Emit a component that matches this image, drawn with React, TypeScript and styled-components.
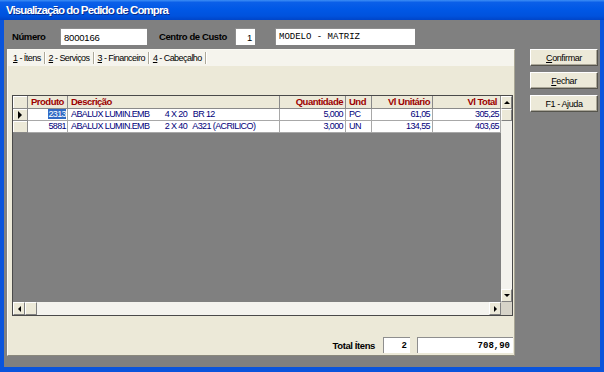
import styled, { createGlobalStyle } from "styled-components";

const sans = `"Liberation Sans", Arial, sans-serif`;
const mono = `"Liberation Mono", "Courier New", monospace`;

const GlobalStyle = createGlobalStyle`
  html, body {
    margin: 0;
    padding: 0;
    background: #808080;
  }
  body {
    font-family: ${sans};
    font-size: 9.5px;
    letter-spacing: -0.4px;
    color: #000;
  }
`;

const Window = styled.div`
  width: 604px;
  height: 372px;
  display: flex;
  flex-direction: column;
  overflow: hidden;
`;

const TitleBar = styled.div`
  height: 20px;
  flex: none;
  display: flex;
  align-items: center;
  padding-left: 6px;
  background: linear-gradient(#3d8ef5 0%, #0b5fe8 12%, #0058e6 45%, #0052dd 80%, #0045c8 100%);
`;

const Title = styled.span`
  color: #fff;
  font: bold 11.5px ${sans};
  letter-spacing: -0.9px;
  text-shadow: 1px 1px #0a2a8a;
`;

const Body = styled.div`
  flex: 1;
  background: #808080;
  border: solid #0a54dc;
  border-width: 0 4px 5px 4px;
  display: flex;
  flex-direction: column;
`;

const HeaderRow = styled.div`
  margin-top: 8px;
  padding-left: 8px;
  height: 17px;
  display: flex;
  align-items: center;
`;

const Label = styled.span<{ $w?: number; $ml?: number; $mr?: number }>`
  font-weight: bold;
  white-space: nowrap;
  width: ${(p) => (p.$w ? `${p.$w}px` : "auto")};
  margin-left: ${(p) => p.$ml ?? 0}px;
  margin-right: ${(p) => p.$mr ?? 0}px;
  flex: none;
`;

const Field = styled.div<{ $w: number; $h?: number; $ml?: number; $right?: boolean; $mono?: boolean; $bold?: boolean }>`
  box-sizing: border-box;
  width: ${(p) => p.$w}px;
  height: ${(p) => p.$h ?? 17}px;
  margin-left: ${(p) => p.$ml ?? 0}px;
  flex: none;
  background: #fff;
  box-shadow: inset 1px 1px #8e8e8e;
  display: flex;
  align-items: center;
  justify-content: ${(p) => (p.$right ? "flex-end" : "flex-start")};
  padding: 1px 3px 0 4px;
  font-family: ${(p) => (p.$mono ? mono : sans)};
  font-size: ${(p) => (p.$mono ? "9px" : "9.5px")};
  letter-spacing: ${(p) => (p.$mono ? "0" : "-0.2px")};
  font-weight: ${(p) => (p.$bold ? "bold" : "normal")};
  white-space: pre;
`;

const Main = styled.div`
  margin-top: 4px;
  padding-left: 3px;
  height: 307px;
  display: flex;
`;

const Panel = styled.div`
  box-sizing: border-box;
  width: 508px;
  height: 307px;
  background: #ece9d8;
  border: 1px solid;
  border-color: #fbfaf5 #a9a695 #8a887c #fbfaf5;
  display: flex;
  flex-direction: column;
`;

const TabStrip = styled.div`
  height: 16px;
  padding-left: 1px;
  background: #f5f4ed;
  display: flex;
  align-items: center;
`;

const Tab = styled.div`
  height: 12px;
  line-height: 12px;
  padding: 0 3px 0 4px;
  border-right: 1px solid #aca899;
  box-shadow: 1px 0 #fff;
  white-space: nowrap;
  font-size: 9px;
  letter-spacing: -0.55px;
`;

const U = styled.span`
  text-decoration: underline;
`;

const Grid = styled.div`
  box-sizing: border-box;
  margin: 29px 1px 0 4px;
  height: 221px;
  border: 1px solid #4a4a4a;
  background: #808080;
  display: grid;
  grid-template-columns: 1fr 11px;
  grid-template-rows: 1fr 13px;
`;

const DataArea = styled.div`
  display: flex;
  flex-direction: column;
  overflow: hidden;
`;

const cols = "15px 40px 212px 66px 26px 61px 68px";

const GridRow = styled.div<{ $head?: boolean }>`
  display: grid;
  grid-template-columns: ${cols};
  height: ${(p) => (p.$head ? 13 : 12)}px;
  background: ${(p) => (p.$head ? "#ece9d8" : "#fff")};
`;

const Cell = styled.div<{ $head?: boolean; $right?: boolean; $pr?: number }>`
  box-sizing: border-box;
  border-right: 1px solid ${(p) => (p.$head ? "#8a8a8a" : "#a8a8a8")};
  border-bottom: 1px solid ${(p) => (p.$head ? "#8a8a8a" : "#a8a8a8")};
  padding: 0 ${(p) => p.$pr ?? 2}px 0 3px;
  text-align: ${(p) => (p.$right ? "right" : "left")};
  line-height: ${(p) => (p.$head ? 12 : 11)}px;
  font-size: ${(p) => (p.$head ? "9.5px" : "9px")};
  letter-spacing: ${(p) => (p.$head ? "-0.5px" : "-0.6px")};
  white-space: pre;
  overflow: hidden;
  color: ${(p) => (p.$head ? "#9c0000" : "#00007a")};
  font-weight: ${(p) => (p.$head ? "bold" : "normal")};
`;

const Indicator = styled.div`
  box-sizing: border-box;
  background: #ece9d8;
  border-right: 1px solid #8a8a8a;
  border-bottom: 1px solid #8a8a8a;
  box-shadow: inset 1px 1px #fff;
  display: flex;
  align-items: center;
  justify-content: center;
`;

const Pointer = styled.span`
  width: 0;
  height: 0;
  border-top: 4px solid transparent;
  border-bottom: 4px solid transparent;
  border-left: 4px solid #000;
`;

const Sel = styled.span`
  background: #316ac5;
  color: #fff;
`;

const VScroll = styled.div`
  display: flex;
  flex-direction: column;
  background: #f4f3ee;
`;

const HScroll = styled.div`
  display: flex;
  background: #f4f3ee;
`;

const ScrollBtn = styled.div<{ $w?: number; $h?: number }>`
  box-sizing: border-box;
  flex: none;
  width: ${(p) => (p.$w ? `${p.$w}px` : "auto")};
  height: ${(p) => (p.$h ? `${p.$h}px` : "auto")};
  background: #ece9d8;
  border: 1px solid;
  border-color: #fff #808080 #808080 #fff;
  display: flex;
  align-items: center;
  justify-content: center;
`;

const Arrow = styled.span<{ $dir: "up" | "down" | "left" | "right" }>`
  width: 0;
  height: 0;
  border: 3px solid transparent;
  ${(p) =>
    p.$dir === "up"
      ? "border-bottom: 3px solid #000; border-top-width: 0; margin-top: -1px;"
      : p.$dir === "down"
      ? "border-top: 3px solid #000; border-bottom-width: 0;"
      : p.$dir === "left"
      ? "border-right: 3px solid #000; border-left-width: 0;"
      : "border-left: 3px solid #000; border-right-width: 0;"}
`;

const Track = styled.div`
  flex: 1;
`;

const Corner = styled.div`
  background: #d6d3c8;
`;

const Footer = styled.div`
  margin-top: auto;
  padding: 0 1px 2px 0;
  display: flex;
  justify-content: flex-end;
  align-items: center;
`;

const Buttons = styled.div`
  margin-left: 15px;
  width: 68px;
  display: flex;
  flex-direction: column;
  gap: 6px;
`;

const Button = styled.div`
  box-sizing: border-box;
  height: 17px;
  background: #ece9d8;
  border: 1px solid;
  border-color: #fff #55544c #55544c #fff;
  box-shadow: inset -1px -1px #aca899;
  display: flex;
  align-items: center;
  justify-content: center;
  font-size: 9px;
  letter-spacing: -0.4px;
`;

type Item = {
  code: string;
  desc: string;
  qty: string;
  und: string;
  unit: string;
  total: string;
};

const items: Item[] = [
  { code: "2313", desc: "ABALUX LUMIN.EMB        4 X 20   BR 12", qty: "5,000", und: "PC", unit: "61,05", total: "305,25" },
  { code: "5881", desc: "ABALUX LUMIN.EMB        2 X 40   A321 (ACRILICO)", qty: "3,000", und: "UN", unit: "134,55", total: "403,65" },
];

export default function App() {
  return (
    <>
      <GlobalStyle />
      <Window>
        <TitleBar>
          <Title>Visualização do Pedido de Compra</Title>
        </TitleBar>
        <Body>
          <HeaderRow>
            <Label $w={48}>Número</Label>
            <Field $w={87}>8000166</Field>
            <Label $w={76} $ml={12}>
              Centro de Custo
            </Label>
            <Field $w={20} $right>
              1
            </Field>
            <Field $w={140} $ml={20} $mono>
              MODELO - MATRIZ
            </Field>
          </HeaderRow>
          <Main>
            <Panel>
              <TabStrip>
                <Tab>
                  <U>1</U> - Ítens
                </Tab>
                <Tab>
                  <U>2</U> - Serviços
                </Tab>
                <Tab>
                  <U>3</U> - Financeiro
                </Tab>
                <Tab>
                  <U>4</U> - Cabeçalho
                </Tab>
              </TabStrip>
              <Grid>
                <DataArea>
                  <GridRow $head>
                    <Indicator />
                    <Cell $head $right $pr={4}>Produto</Cell>
                    <Cell $head>Descrição</Cell>
                    <Cell $head $right>Quantidade</Cell>
                    <Cell $head>Und</Cell>
                    <Cell $head $right>Vl Unitário</Cell>
                    <Cell $head $right $pr={3}>Vl Total</Cell>
                  </GridRow>
                  {items.map((it, i) => (
                    <GridRow key={it.code}>
                      <Indicator>{i === 0 && <Pointer />}</Indicator>
                      <Cell $right $pr={1}>
                        {i === 0 ? <Sel>{it.code}</Sel> : it.code}
                      </Cell>
                      <Cell>{it.desc}</Cell>
                      <Cell $right>{it.qty}</Cell>
                      <Cell>{it.und}</Cell>
                      <Cell $right>{it.unit}</Cell>
                      <Cell $right $pr={1}>{it.total}</Cell>
                    </GridRow>
                  ))}
                </DataArea>
                <VScroll>
                  <ScrollBtn $h={13}>
                    <Arrow $dir="up" />
                  </ScrollBtn>
                  <ScrollBtn $h={12} />
                  <Track />
                  <ScrollBtn $h={13}>
                    <Arrow $dir="down" />
                  </ScrollBtn>
                </VScroll>
                <HScroll>
                  <ScrollBtn $w={12}>
                    <Arrow $dir="left" />
                  </ScrollBtn>
                  <ScrollBtn $w={12} />
                  <Track />
                  <ScrollBtn $w={12}>
                    <Arrow $dir="right" />
                  </ScrollBtn>
                </HScroll>
                <Corner />
              </Grid>
              <Footer>
                <Label $mr={8}>Total Ítens</Label>
                <Field $w={27} $h={16} $right $mono $bold>
                  2
                </Field>
                <Field $w={96} $h={16} $ml={7} $right $mono $bold>
                  708,90
                </Field>
              </Footer>
            </Panel>
            <Buttons>
              <Button>
                <span>
                  <U>C</U>onfirmar
                </span>
              </Button>
              <Button>
                <span>
                  <U>F</U>echar
                </span>
              </Button>
              <Button>F1 - Ajuda</Button>
            </Buttons>
          </Main>
        </Body>
      </Window>
    </>
  );
}
